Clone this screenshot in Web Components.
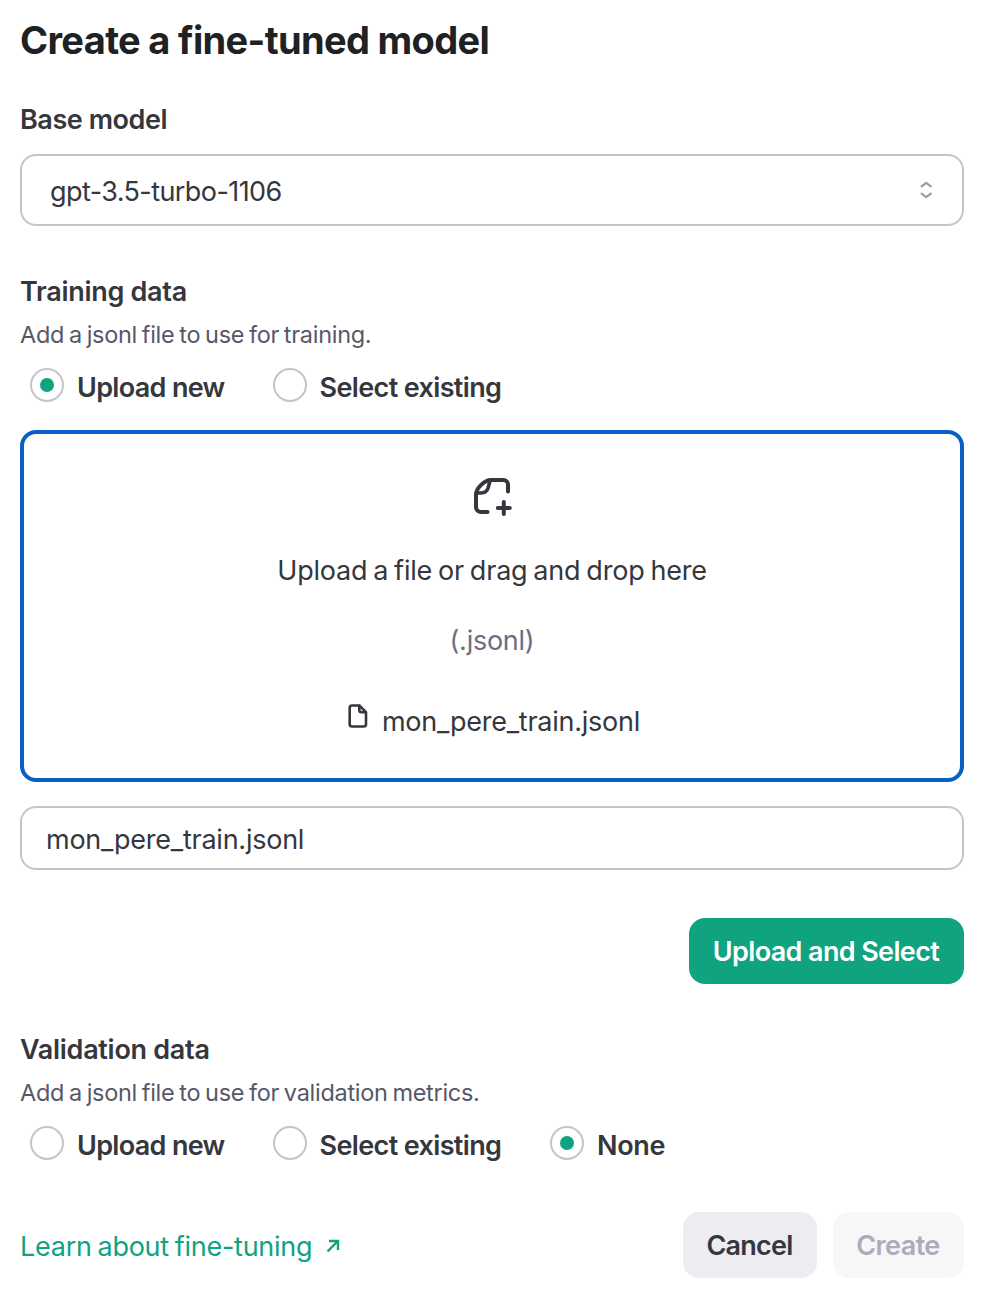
<!DOCTYPE html>
<html lang="en">
<head>
<meta charset="utf-8">
<title>Create a fine-tuned model</title>
<style>
  body { margin: 0; background: #fff; }
</style>
</head>
<body>
<fine-tune-dialog></fine-tune-dialog>

<script>
const FONT = 'Inter, "Liberation Sans", sans-serif';

function define(name, html) {
  const template = document.createElement('template');
  template.innerHTML = html;
  customElements.define(name, class extends HTMLElement {
    constructor() {
      super();
      this.attachShadow({ mode: 'open' }).append(template.content.cloneNode(true));
    }
  });
}

/* Section heading with an optional description below it */
define('section-label', `
  <style>
    :host { display: block; padding-top: 1px; }
    .title { font: 640 27px/40px ${FONT}; color: #35373d; letter-spacing: var(--ls, -.29px); white-space: nowrap; }
    ::slotted([slot=description]) { display: block; margin-top: 7px; font: 400 23.5px/32px ${FONT}; color: #565869; letter-spacing: -.29px; word-spacing: -1.5px; }
  </style>
  <div class="title"><slot></slot></div>
  <slot name="description"></slot>`);

define('select-box', `
  <style>
    :host { display: flex; align-items: center; justify-content: space-between; box-sizing: border-box;
      height: 72px; padding: 4px 28px 0 28px; border: 2px solid #c5c5c9; border-radius: 16px;
      font: 400 27px/40px ${FONT}; letter-spacing: -.578px; color: #35373d; }
    svg { display: block; margin-top: -4px; }
  </style>
  <slot></slot>
  <svg width="16" height="22" viewBox="0 0 16 22" fill="none" stroke="#9b9ba3" stroke-width="2.2" stroke-linecap="round" stroke-linejoin="round"><path d="M3.600 7.300 8.200 3.900l4.600 3.400M3.600 14.700l4.600 3.400 4.600-3.400"/></svg>`);

define('radio-option', `
  <style>
    :host { display: flex; height: 40px; gap: var(--gap, 13px); font: 560 27px/40px ${FONT}; letter-spacing: var(--ls, -.35px); color: #35373d; white-space: nowrap; }
    .dot { box-sizing: border-box; width: 34px; height: 34px; margin-top: 1px; border: 2px solid #c5c5c9; border-radius: 50%; display: grid; place-items: center; flex: none; }
    :host([checked]) .dot::after { content: ""; width: 14px; height: 14px; border-radius: 50%; background: #10a37f; }
    .label { padding-top: 1px; }
  </style>
  <span class="dot"></span><span class="label"><slot></slot></span>`);

define('radio-row', `
  <style>:host { display: flex; padding-left: 10px; margin-top: 16px; }</style>
  <slot></slot>`);

define('drop-zone', `
  <style>
    :host { display: flex; flex-direction: column; align-items: center; box-sizing: border-box; height: 352px;
      padding-top: 40px; border: 4px solid #0a5fc5; border-radius: 16px;
      font: 400 27px/40px ${FONT}; color: #35373d; }
    svg { display: block; }
    .prompt { margin-top: 33px; letter-spacing: -.2px; word-spacing: -1.5px; }
    .kind { margin-top: 30px; color: #6e6e80; letter-spacing: -.25px; }
    .file { margin-top: 41px; display: flex; gap: 14px; letter-spacing: -.24px; padding-left: 4px; }
    .file svg { margin-top: 2px; }
  </style>
  <svg width="44" height="44" viewBox="0 0 44 44" fill="none" stroke="#35373d" stroke-width="4" stroke-linecap="round" stroke-linejoin="round"><path d="M17.500 38H11a5 5 0 0 1-5-5V20.500C6 15 14 6 21 6H33.500a4.500 4.500 0 0 1 4.500 4.500V17.500"/><path d="M6.500 19h4.500c4 0 6-1.500 7-4.700L20 7" stroke-width="3.600"/><path d="M33.800 28v12M27.800 34h12"/></svg>
  <div class="prompt"><slot></slot></div>
  <div class="kind"><slot name="kind"></slot></div>
  <div class="file">
    <svg width="20" height="24" viewBox="0 0 20 24" fill="none" stroke="#35373d" stroke-width="2.600" stroke-linecap="round" stroke-linejoin="round"><path d="M4 1.500h7.300l6.700 6.700V20.200a2.300 2.300 0 0 1-2.300 2.300H4a2.300 2.300 0 0 1-2.300-2.300V3.800a2.300 2.300 0 0 1 2.300-2.300Z"/><path d="M11.300 1.800V6a2.200 2.200 0 0 0 2.200 2.200h4"/></svg>
    <slot name="file"></slot>
  </div>`);

define('text-field', `
  <style>
    :host { display: flex; align-items: center; box-sizing: border-box; height: 64px; padding: 3px 24px 0;
      border: 2px solid #c5c5c9; border-radius: 16px; font: 400 27px/40px ${FONT}; letter-spacing: -.24px; color: #35373d; }
  </style>
  <slot></slot>`);

define('action-button', `
  <style>
    :host { display: flex; align-items: center; justify-content: center; box-sizing: border-box; height: 66px; width: var(--w); padding: 2px 1px 0 0;
      border-radius: 16px; font: 560 27px/40px ${FONT}; letter-spacing: var(--ls); background: #ececf1; color: #35373d; white-space: nowrap; }
    :host([primary]) { background: #10a37f; color: #fff; }
    :host([disabled]) { background: #f7f7f8; color: #acacbb; }
  </style>
  <slot></slot>`);

define('external-link', `
  <style>
    :host { display: flex; align-items: center; gap: 14px; font: 400 27px/40px ${FONT}; letter-spacing: -.26px; word-spacing: -1.5px; color: #10a37f; }
    svg { display: block; margin-top: -2px; }
  </style>
  <slot></slot>
  <svg width="14" height="14" viewBox="0 0 14 14" fill="none" stroke="#10a37f" stroke-width="2.400"><path d="M1.500 12.500 11.800 2.200M3 2h9V11"/></svg>`);

define('fine-tune-dialog', `
  <style>
    :host { display: block; box-sizing: border-box; height: 1306px; padding: 16px 28px 0 20px; }
    h1 { margin: 0; font: 660 38px/48px ${FONT}; letter-spacing: -.65px; color: #202123; }
    .base { margin-top: 35px; --ls: -.45px; }
    select-box { margin-top: 14px; }
    .data { margin-top: 45px; }
    drop-zone { margin-top: 23px; }
    text-field { margin-top: 24px; }
    .upload { display: flex; justify-content: flex-end; margin-top: 48px; }
    .new { width: 243px; box-sizing: border-box; --ls: -.68px; }
    .existing { width: 277px; box-sizing: border-box; --ls: -.63px; --gap: 12.5px; }
    footer { display: flex; align-items: center; gap: 16px; margin-top: 47px; }
    external-link { margin-right: auto; padding-top: 3px; }
  </style>
  <h1>Create a fine-tuned model</h1>
  <section-label class="base">Base model</section-label>
  <select-box>gpt-3.5-turbo-1106</select-box>

  <section-label class="data">Training data<span slot="description">Add a jsonl file to use for training.</span></section-label>
  <radio-row>
    <radio-option class="new" checked>Upload new</radio-option>
    <radio-option class="existing">Select existing</radio-option>
  </radio-row>
  <drop-zone>Upload a file or drag and drop here<span slot="kind">(.jsonl)</span><span slot="file">mon_pere_train.jsonl</span></drop-zone>
  <text-field>mon_pere_train.jsonl</text-field>
  <div class="upload"><action-button primary style="--w:275px;--ls:-.63px">Upload and Select</action-button></div>

  <section-label class="data">Validation data<span slot="description">Add a jsonl file to use for validation metrics.</span></section-label>
  <radio-row>
    <radio-option class="new">Upload new</radio-option>
    <radio-option class="existing">Select existing</radio-option>
    <radio-option checked>None</radio-option>
  </radio-row>
  <footer>
    <external-link>Learn about fine-tuning</external-link>
    <action-button style="--w:134px;--ls:-.75px">Cancel</action-button>
    <action-button disabled style="--w:131px;--ls:-.6px">Create</action-button>
  </footer>`);
</script>
</body>
</html>
